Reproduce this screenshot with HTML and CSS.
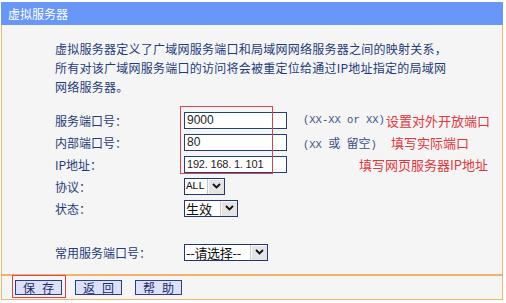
FILE: index.html
```html
<!DOCTYPE html>
<html lang="zh-CN">
<head>
    <meta charset="UTF-8">
    <title>虚拟服务器</title>
    <link rel="stylesheet" href="styles.css">
</head>
<body>
<div class="panel">
    <div class="title">虚拟服务器</div>
    <div class="content">
        <p class="desc">虚拟服务器定义了广域网服务端口和局域网网络服务器之间的映射关系，<br>所有对该广域网服务端口的访问将会被重定位给通过IP地址指定的局域网<br>网络服务器。</p>
        <div class="form">
            <div class="mark mark-ports"></div>
            <div class="row">
                <span class="label">服务端口号：</span>
                <span class="field"><span class="input">9000</span></span>
                <span class="hint">(XX-XX or XX)</span><span class="note">设置对外开放端口</span>
            </div>
            <div class="row">
                <span class="label">内部端口号：</span>
                <span class="field"><span class="input">80</span></span>
                <span class="hint">(XX <span class="cjk">或</span> <span class="cjk">留空</span>)</span><span class="note note-2">填写实际端口</span>
            </div>
            <div class="row">
                <span class="label">IP地址：</span>
                <span class="field"><span class="input input-ip">192. 168. 1. 101</span></span>
                <span class="note note-3">填写网页服务器IP地址</span>
            </div>
            <div class="row">
                <span class="label">协议：</span>
                <span class="field"><span class="select sel-all"><span class="val mono">ALL</span><span class="arrow"><svg width="9" height="6" viewBox="0 0 9 6"><path d="M1 1l3.5 3.5L8 1" fill="none" stroke="#111" stroke-width="1.8"/></svg></span></span></span>
            </div>
            <div class="row">
                <span class="label">状态：</span>
                <span class="field"><span class="select sel-state"><span class="val">生效</span><span class="arrow"><svg width="9" height="6" viewBox="0 0 9 6"><path d="M1 1l3.5 3.5L8 1" fill="none" stroke="#111" stroke-width="1.8"/></svg></span></span></span>
            </div>
            <div class="row row-common">
                <span class="label">常用服务端口号：</span>
                <span class="field"><span class="select sel-common"><span class="val">--请选择--</span><span class="arrow"><svg width="9" height="6" viewBox="0 0 9 6"><path d="M1 1l3.5 3.5L8 1" fill="none" stroke="#111" stroke-width="1.8"/></svg></span></span></span>
            </div>
        </div>
    </div>
    <div class="bar">
        <span class="btn-wrap"><span class="btn">保存</span><span class="mark mark-save"></span></span>
        <span class="btn">返回</span>
        <span class="btn">帮助</span>
    </div>
</div>
</body>
</html>
```

FILE: styles.css
```css
*{
    margin: 0;
    padding: 0;
    box-sizing: border-box;
}
body{
    background: #fff;
    font-family: "Noto Sans CJK SC", "Liberation Sans", sans-serif;
    font-size: 12px;
    color: #1f3b7a;
}
.panel{
    width: 502px;
    margin: 2px 0 0 1px;
}
.title{
    height: 23px;
    line-height: 23px;
    padding-left: 7px;
    background: #6897f8;
    color: #fff;
    font-size: 12px;
}
.content{
    background: #f5f5f5;
    border: 1px solid #f2b36f;
    border-top: none;
    padding: 14px 0 11px 53px;
}
.desc{
    line-height: 19px;
    letter-spacing: 0.25px;
}
.form{
    position: relative;
    margin-top: 13px;
}
.row{
    display: flex;
    align-items: center;
    height: 22px;
    white-space: nowrap;
}
.row-common{
    margin-top: 22px;
}
.label{
    width: 129px;
}
.field{
    width: 119px;
    display: flex;
}
.input{
    width: 103px;
    height: 17px;
    line-height: 15px;
    padding-left: 2px;
    background: #fff;
    border: 1px solid #22407e;
    color: #222;
    font-family: "Liberation Sans", sans-serif;
    font-size: 12px;
    overflow: hidden;
}
.input-ip{
    font-size: 11px;
    letter-spacing: -0.2px;
}
.select{
    display: flex;
    height: 17px;
    background: #fff;
    border: 1px solid #22356f;
    color: #111;
}
.val{
    flex: 1;
    line-height: 15px;
    padding-left: 1px;
    font-size: 13px;
}
.mono{
    font-family: "Liberation Mono", monospace;
    font-size: 11px;
    letter-spacing: -0.5px;
}
.arrow{
    width: 17px;
    display: flex;
    align-items: center;
    justify-content: center;
    background: #e4e4e4;
    border-left: 1px solid #c8c8c8;
    box-shadow: inset 1px 1px 0 #fafafa;
}
.sel-all{
    width: 41px;
}
.sel-state{
    width: 54px;
}
.sel-common{
    width: 84px;
}
.sel-common .val{
    letter-spacing: -0.3px;
}
.hint{
    font-family: "Liberation Mono", "Noto Sans CJK SC", monospace;
    font-size: 10.5px;
    color: #3a4f86;
}
.cjk{
    font-family: "Noto Sans CJK SC", sans-serif;
    font-size: 12px;
}
.note{
    margin-left: 1px;
    color: #e3353c;
    font-size: 13px;
}
.note-2{
    margin-left: 14px;
}
.note-3{
    margin-left: 56px;
}
.mark{
    position: absolute;
    border: 1px solid #d9454d;
    pointer-events: none;
}
.mark-ports{
    top: -3px;
    left: 125px;
    width: 93px;
    height: 68px;
}
.bar{
    display: flex;
    align-items: center;
    gap: 13px;
    height: 25px;
    padding-left: 13px;
    background: #f5f5f5;
    border: 1px solid #f2b36f;
}
.btn-wrap{
    position: relative;
    display: flex;
}
.btn{
    width: 47px;
    height: 15px;
    line-height: 13px;
    padding-left: 7px;
    letter-spacing: 7px;
    white-space: nowrap;
    background: #dde0fa;
    border: 1px solid #2a3f80;
    color: #1a2b6a;
    font-size: 12px;
}
.mark-save{
    top: -5px;
    left: -3px;
    right: -4px;
    bottom: -3px;
}
```
